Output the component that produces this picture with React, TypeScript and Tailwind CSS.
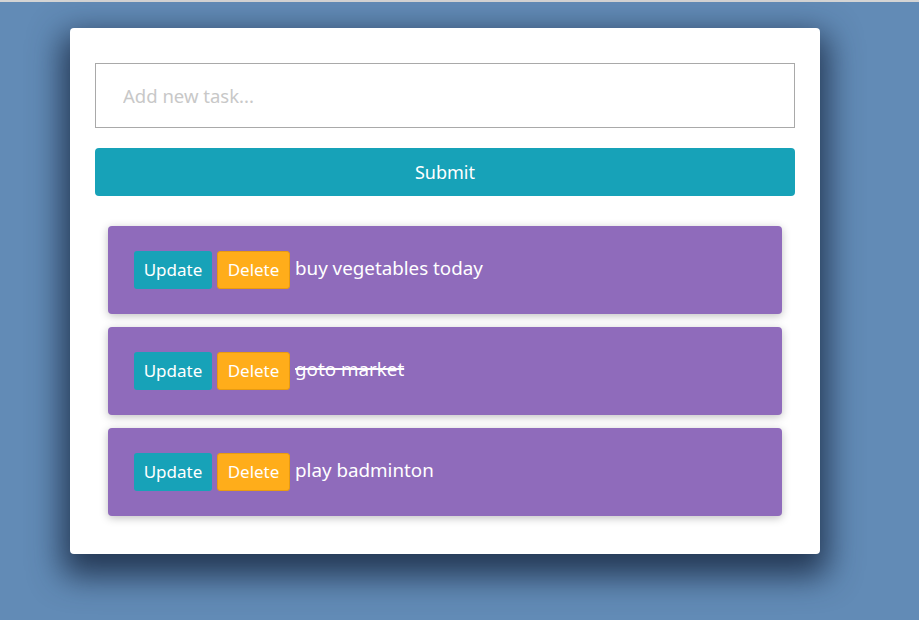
const tasks = [
  { text: "buy vegetables today", done: false },
  { text: "goto market", done: true },
  { text: "play badminton", done: false },
];

export default function App() {
  return (
    <div className="min-h-[620px] bg-[#628bb6] border-t-2 border-[#d4d4d4] pt-[26px] pl-[70px] font-['Noto_Sans',sans-serif]">
      <div className="w-[750px] bg-white rounded-[4px] pt-[35px] px-[25px] pb-[38px] shadow-[0_14px_32px_8px_rgba(20,35,60,0.8)]">
        <input
          type="text"
          placeholder="Add new task..."
          className="block w-full h-[65px] border border-[#a9a9a9] px-[27px] text-[18.5px] text-gray-700 placeholder:text-[#c8c8c8] outline-none"
        />
        <button className="mt-[20px] w-full h-[48px] bg-[#17a2b8] rounded-[4px] text-white text-[18px]">
          Submit
        </button>
        <div className="mt-[30px] mx-[13px] flex flex-col gap-[13px]">
          {tasks.map((t) => (
            <div
              key={t.text}
              className="h-[88px] bg-[#8f6bbb] rounded-[4px] px-[26px] pt-[25px] shadow-[0_2px_8px_rgba(0,0,0,0.25)]"
            >
              <div className="flex items-center gap-[5px] h-[38px]">
                <button className="h-[38px] w-[78px] bg-[#17a2b8] rounded-[3px] text-white text-[17px]">
                  Update
                </button>
                <button className="h-[38px] w-[73px] bg-[#ffad1a] border border-[#e89b10] rounded-[3px] text-white text-[17px]">
                  Delete
                </button>
                <span
                  className={
                    "text-white text-[18.8px] -mt-[4px] decoration-2 " + (t.done ? "line-through" : "")
                  }
                >
                  {t.text}
                </span>
              </div>
            </div>
          ))}
        </div>
      </div>
    </div>
  );
}
